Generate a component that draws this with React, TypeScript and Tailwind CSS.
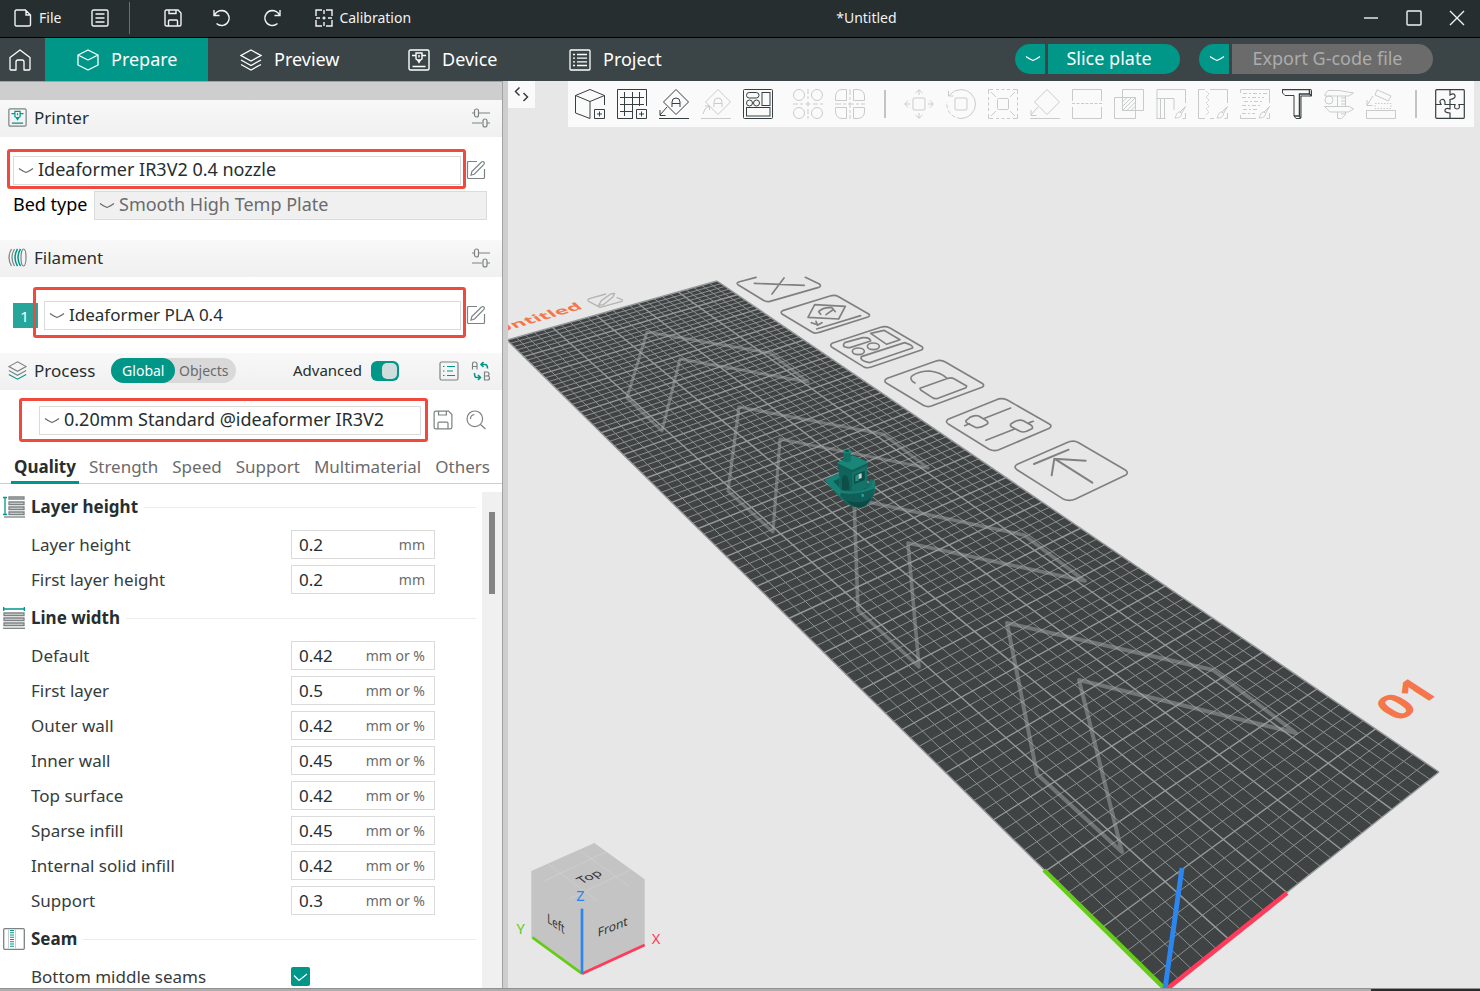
import React from "react";

type Kids = { children: React.ReactNode };

/* ---------- icon helpers ---------- */

function Svg({ s, vb, w = 1, children, className = "" }: Kids & { s: number; vb?: number; w?: number; className?: string }) {
  const v = vb ?? s;
  return (
    <svg width={s} height={s} viewBox={`0 0 ${v} ${v}`} fill="none" stroke="currentColor" strokeWidth={w} aria-hidden="true" className={`shrink-0 ${className}`}>
      {children}
    </svg>
  );
}

const Chevron = ({ className = "" }: { className?: string }) => (
  <svg width="16" height="8" viewBox="0 0 16 8" fill="none" stroke="currentColor" strokeWidth="1.2" className={`shrink-0 ${className}`} aria-hidden="true">
    <path d="M1 1.500c2.500 2 4.500 3 7 4 2.500-1 4.500-2 7-4" />
  </svg>
);

const SaveIcon = ({ s = 18, w = 1.4 }: { s?: number; w?: number }) => (
  <Svg s={s} vb={18} w={w}>
    <path d="M1 2.500Q1 1 2.500 1H14l3 3v11.500q0 1.500-1.500 1.500h-13Q1 17 1 15.500Z" />
    <path d="M5 1v3.500h7V1M4.500 17v-5q0-1 1-1h7q1 0 1 1v5" />
  </Svg>
);

const Sliders = () => (
  <Svg s={20} w={1.2}>
    <path d="M1 5h2M8 5h11M1 15h10M16 15h3" />
    <rect x="3.500" y="1" width="4" height="8" rx="2" />
    <rect x="12" y="11" width="4" height="8" rx="2" />
  </Svg>
);

const EditIcon = () => (
  <Svg s={20} w={1.2}>
    <path d="M11 1.500H2.500q-1 0-1 1v15q0 1 1 1h15q1 0 1-1V9" />
    <path d="M5 15.200 5.800 11.500 15.500 2q1.300-1 2.400 0t0 2.400L8.500 14Z" />
  </Svg>
);

const LayersIcon = ({ s = 22, accent }: { s?: number; accent?: string }) => (
  <Svg s={s} vb={22} w={1.3}>
    <path d="M11 1 21 6.500 11 12 1 6.500Z" />
    <path d="m1 11 10 5.500L21 11" />
    <path d="m1 15.500 10 5.500 10-5.500" stroke={accent ?? "currentColor"} />
  </Svg>
);

const PrinterIcon = ({ s = 22, accent }: { s?: number; accent?: string }) => (
  <Svg s={s} vb={22} w={1.4}>
    <rect x="1" y="1" width="20" height="20" rx="1.500" />
    <g stroke={accent ?? "currentColor"}>
      <path d="M4 6.500h4M14 6.500h4M4.500 17.500h13M8 4h6v6l-1.500 1h-3L8 10ZM9.500 11 11 13.500 12.500 11M11 6v2.500" />
    </g>
  </Svg>
);

/* ---------- toolbar icons, 30 x 30 ---------- */

const Plus = () => <path d="M19.500 20.500h10v9h-10ZM24.500 22.500v5M22 25h5" />;
const Brush = () => <path d="M29.500 17.500 24 23l1.500 1.500ZM24 23c-3 0-3.500 2.500-5 6 3.500 0 6.500-1 6.500-4.500" />;

const I = ({ children }: Kids) => <Svg s={30}>{children}</Svg>;

const toolsA: [string, React.ReactNode, boolean][] = [
  ["Add", <I><path d="M.5 6.500 15 .5l14.500 6L15 12.500ZM.5 6.500V24L15 29.500v-17M29.500 6.500V16" /><Plus /></I>, true],
  ["Add plate", <I><path d="M29.500 17V.5H.5v29H16M7.500 3v24M15.500 3v26M22.500 3v14M3 8.500h24M3 15.500h24M3 22.500h13" /><Plus /></I>, true],
  ["Auto orient", <I><path d="M17 .5 29.500 13 17 25.500 4.500 13ZM13 18v-5q0-4 4-4t4 4v5M13 14.500h8M0 29.500h30M8 18l-7 8M1 21v5.500h5.500" /></I>, true],
  ["Orient selection", <I><path d="M17 .5 29.500 13 17 25.500 4.500 13ZM13 18v-5q0-4 4-4t4 4v5M13 14.500h8M0 29.500h30M2 25q1-6 6-8M4 17h4.500v4" /></I>, false],
  ["Arrange", <I><rect x=".5" y=".5" width="29" height="29" rx="1" /><rect x="3.500" y="3.500" width="12.500" height="5.500" rx="2.700" /><circle cx="6.500" cy="14" r="3" /><circle cx="13.500" cy="14" r="3" /><rect x="19" y="3.500" width="8" height="13" /><rect x="3.500" y="18.500" width="23.500" height="8.500" /></I>, true],
];

const toolsB: [string, React.ReactNode][] = [
  ["Split to objects", <I><circle cx="6" cy="6" r="5.500" /><circle cx="24" cy="6" r="5.500" /><circle cx="6" cy="24" r="5.500" /><circle cx="24" cy="24" r="5.500" /><path d="M15 0v10M15 12.500v5M15 20v10M0 15h10M12.500 15h5M20 15h10" strokeDasharray="5 2" /></I>],
  ["Split to parts", <I><path d="M11.500.5v11H.5V7Q1 1 7 .5ZM18.500.5v11h11V7Q29 1 23 .5ZM.5 18.500h11v11H7Q1 29 .5 23ZM18.500 18.500h11V23q-.5 6-6.500 6.500h-4.500Z" /><path d="M15 0v30M0 15h30" strokeDasharray="6 2 3 2" /></I>],
];

const toolsC: [string, React.ReactNode, boolean][] = [
  ["Move", <I><rect x="9" y="9" width="12" height="12" rx="1" /><path d="M15 1v5M15 24v5M1 15h5M24 15h5M11.500 4 15 .7 18.500 4M11.500 26l3.500 3.300 3.500-3.300M4 11.500.7 15 4 18.500M26 11.500l3.300 3.500-3.300 3.500" /></I>, false],
  ["Rotate", <I><rect x="9" y="9" width="12" height="12" rx="1" /><path d="M3 6.500Q8 .5 15 .5A14.400 14.400 0 0 1 15 29.500M2.500 2v5h5" /><path d="M15 29.500Q1 28 .5 13" strokeDasharray="4 2" /></I>, false],
  ["Scale", <I><rect x="9.500" y="9.500" width="11" height="11" rx="1" /><path d="M.5 5V.5H5M25 .5h4.500V5M29.500 25v4.500H25M5 29.500H.5V25M3 3l5 5M27 3l-5 5M27 27l-5-5M3 27l5-5" /><path d="M8 .5h14M8 29.500h14M.5 8v14M29.500 8v14" strokeDasharray="3 2.500" /></I>, false],
  ["Lay on face", <I><path d="M17 .5 29.500 13 17 25.500 4.500 13ZM0 29.500h30M8 18l-7 8M1 21v5.500h5.500" /></I>, false],
  ["Cut", <I><path d="M.5 12V.5h29V12M.5 18v11.500h29V18" /><path d="M0 14.500h30" strokeDasharray="3 1.500" /></I>, false],
  ["Mesh boolean", <I><path d="M8.500.5h21v21h-21ZM.5 8.500h21v21H.5ZM8.500 13 13 8.500M8.500 17.500l9-9M8.500 21.500l13-13M13 21.500l8.500-8.500M17 21.500l4.500-4.500" /></I>, false],
  ["Support painting", <I><path d="M1 29.500V.5h28.500V14M.5 9.500H18V21M4.500 10v19.500M8.500 10v19.500M.5 29.500h9M29.500 24v5.500h-3" /><Brush /></I>, false],
  ["Seam painting", <I><path d="M29.500 14V.5H12M7 .5H.5v29H7M12 29.500h4M29.500 24v5.500h-3" /><path d="m8 2 3 3-3 3 3 3-3 3 3 3-3 3 3 3-3 3" strokeDasharray="2 1" /><Brush /></I>, false],
  ["Fuzzy skin painting", <I><path d="M.5 4V.5h29V14M.5 26v3.500H16M29.500 24v5.500h-3" /><path d="M3 4.500h24M2 8.500h22M4 12.500h18M2 16.500h18M3 20.500h14M2 24.500h13" strokeDasharray="4 2 2 2" /><Brush /></I>, false],
  ["Text", <I><path d="M2.500.5h26q1 0 1 1V7H19v21.500q0 1-1 1h-4L12 27V6.500H3L.5 4V.5Z" /><path d="M.5.500h27V5H17.500v22H12M27.500 5l2 2M17.500 27l1 2" strokeWidth="1.500" /></I>, true],
  ["Measure", <I><circle cx="5" cy="11" r="4" /><path d="M1 5 4 1.500h11l14.500 2.500-5 3H1ZM.5 17.500h25l4 2.500-5 3H6ZM13.500 7v10M21.500 7v10M13.500 23v6.500h4l4-4V23M17 9h4M17 12h4M17 15h4M17 25h4" /></I>, false],
  ["Assembly view", <I><path d="M11 .8 25 7l-2.500 5L9 6ZM.5 21.500h29v8H.5ZM7 7l-6 9M1 11v5.500h5.500" /><path d="M9 14.500h16v5H9Z" strokeDasharray="1.500 1.500" /></I>, false],
];

const Puzzle = () => (
  <Svg s={30} w={1.2}>
    <rect x=".7" y=".7" width="28.600" height="28.600" rx="1" />
    <path d="M15 .7V6q4-2.500 5 .5T15 10.500v5M15 15.500v4.500q-4-1.500-5 1t5 3v5.500M.7 15.500H6q-2.500-4.500 1-5t3 5h5M15 15.500h5q-1.500 4.500 2 4.500t2-4.500h5.300" />
  </Svg>
);

function ToolBtn({ label, off, children }: Kids & { label: string; off?: boolean }) {
  return (
    <button type="button" aria-label={label} disabled={off} className={`flex h-full w-[42px] items-center justify-center ${off ? "text-[#c9cbcb]" : "text-[#363f41]"}`}>
      {children}
    </button>
  );
}

const ToolSep = () => (
  <span className="flex w-[27px] justify-center"><span className="h-7 w-[2px] bg-[#c4c4c4]" /></span>
);

/* ---------- 3D scene ---------- */

const BED_X = 25;
const BED_Y = 100;

/** Maps a bed position (0..1, 0..1) to the screen through the camera's perspective. */
function project(u: number, v: number): [number, number] {
  const w = 1 + 0.2018 * u + 0.9986 * v;
  return [(1165 + 564.4 * u - 151.7 * v) / w, (989 - 61.2 * u - 309.5 * v) / w];
}

function seg(a: [number, number], b: [number, number]) {
  return `M${a[0].toFixed(2)} ${a[1].toFixed(2)}L${b[0].toFixed(2)} ${b[1].toFixed(2)}`;
}

function gridPaths() {
  let thin = "";
  let bold = "";
  for (let i = 0; i <= BED_X; i++) {
    const d = seg(project(i / BED_X, 0), project(i / BED_X, 1));
    if (i % 5 === 0) bold += d;
    else thin += d;
  }
  for (let j = 0; j <= BED_Y; j++) {
    const d = seg(project(0, j / BED_Y), project(1, j / BED_Y));
    if (j % 5 === 0) bold += d;
    else thin += d;
  }
  return { thin, bold };
}

const grid = gridPaths();
const bed = [project(0, 0), project(1, 0), project(1, 1), project(0, 1)].map((p) => p.join(",")).join(" ");

function Scene() {
  return (
    <svg viewBox="508 81 972 907" preserveAspectRatio="xMinYMin slice" className="h-full w-full [grid-area:1/1]" role="img" aria-label="Build plate with a boat model">
      <polygon points={bed} fill="#3f4343" />
      <path d={grid.thin} stroke="#8c8f8f" strokeWidth="1" />
      <path d={grid.bold} stroke="#969999" strokeWidth="1.400" />

      <g fill="none" stroke="#a6a8a8" strokeOpacity=".5" strokeLinejoin="round">
        <path strokeWidth="3" d="M647 332 770 353 808 382 680 359 662 431 627 398Z" />
        <path strokeWidth="3.200" d="M739 407 883 434 928 468 780 439 773 532 728 491Z" />
        <path strokeWidth="3.600" d="M854 499 1024 535 1085 581 908 543 919 667 858 610Z" />
        <path strokeWidth="4" d="M1007 623 1213 670 1296 733 1079 680 1122 852 1037 774Z" />
      </g>

      {/* plate name and its edit mark */}
      <text transform="matrix(1.720 -.5 .78 .72 499 333)" fontSize="12" fontWeight="700" fill="#f4764a" fontFamily="Noto Sans, sans-serif">Untitled</text>
      <g transform="translate(500 260) scale(.33333)" fill="none" stroke="#b4b4b4" strokeWidth="4" strokeLinejoin="round">
        <path d="m318 102-50 14q-8 4-2 8l34 18 66-18q4-4-2-6l-14-6" />
        <path d="m296 136 8-14 28-20 12-2-6 12-28 22Z" />
      </g>

      {/* plate actions */}
      <g transform="translate(720 260) scale(.33333)" fill="none" stroke="#808080" strokeWidth="5" strokeLinejoin="round" strokeLinecap="round">
        <path d="M108 52 56 66q-8 3-2 8l76 47q10 6 20 3l146-42q10-4 2-10l-42-20M103 70l150 6M192 54l-36 48" />
        <path d="m188 152 142-44q14-5 26 2l90 52q6 5-2 9l-146 46q-12 5-22-1l-90-54q-6-6 2-10Z" />
        <path d="m284 134 92 5-20 38-92-5ZM302 163l-6-8q12-14 40-12l10 12M318 164l20-14M288 184l4 10-18-6M292 196l14-8M290 207l132-40" />
        <path d="m336 250 146-48q14-5 28 2l96 56q6 5-2 10l-150 51q-12 5-24-1l-94-58q-8-6 0-12Z" />
        <path d="m374 248 54-15q22-2 24 10l-62 20q-28 0-16-15ZM452 220l40-9 48 28-40 14ZM424 290l130-42q26 8 24 16l-130 44q-30-6-24-18Z" />
        <ellipse cx="415" cy="274" rx="18" ry="10" /><ellipse cx="460" cy="259" rx="18" ry="10" />
        <path d="m502 355 144-51q16-7 30 2l110 64q10 6 0 12l-146 54q-16 8-30 0l-110-66q-12-8 2-15Z" />
        <path d="M585 369q-20-12-8-22 20-14 52-14 34 4 52 22M600 385l84-30q10-3 18 1l38 22-2 5-84 32q-10 3-18-3l-34-22Z" />
        <path d="m684 478 144-58q16-8 34 0l126 72q10 6 0 13l-146 62q-18 10-36 0l-120-74q-12-8-2-15Z" />
        <path d="m734 497 14-6M790 476l82-32M798 541l86-34M928 488l12-4M738 482l12-10q14-8 26-4l24 14q6 6 2 10l-16 8q-12 4-20 2l-24-12q-6-4-4-8ZM872 492l14-8q14-6 24-2l24 14q6 6 2 10l-16 8q-12 4-20 0l-26-14q-4-4-2-8Z" />
        <path d="m892 613 148-65q20-9 36 0l140 82q12 8 0 16l-148 70q-20 10-40 0l-136-86q-14-9 0-17Z" />
        <path d="m942 612 104-43M1117 668 1003 596l94 6M1003 596l-8 50" strokeWidth="6" />
      </g>

      {/* plate number */}
      <text transform="matrix(.86 -.64 .90 .58 1399 723)" fontSize="42" fontWeight="700" fill="#f4764a" fontFamily="Noto Sans, sans-serif">01</text>

      {/* boat */}
      <g transform="translate(500 260) scale(.33333)">
        <path d="m974 660 42-20 12 62 10-12 60-4 14-28q12 0 14 12l-2 30q-8 24-32 40-20 8-44-4l-24-18Z" fill="#14736a" />
        <path d="m1024 692q50 10 98-14l-2 28q-14 30-34 36-24 2-44-12l-36-38Z" fill="#105e57" />
        <path d="M1040 722q40 14 74-8-14 26-30 28-24 2-44-20Z" fill="#0c4a45" />
        <path d="m974 660 42-18 10 10-26 10 24 30-4 18Z" fill="#178377" />
        <path d="m1000 664 18-8v26Z" fill="#0f5a53" />
        <path d="m1014 612 42 22v58l-34-6Z" fill="#11645c" />
        <path d="m1056 634 46-18v66q-20 10-46 10Z" fill="#147268" />
        <path d="m1010 608 48-22 46 20v8l-48 22-44-22Z" fill="#1a8579" />
        <path d="m1010 608 46 22 48-22v8l-48 22-44-20Z" fill="#116158" />
        <path d="m1062 644 32-12v28l-32 12Z" fill="#0c4d47" />
        <path d="m1066 646 10-4v20l-10 3Z" fill="#1d9185" />
        <path d="m1076 642 9-2v14l-9 3Z" fill="#cfd2d2" />
        <path d="M1026 690v-32q4-20 14-10 8 8 8 44Z" fill="#0d4e48" />
        <path d="M1030 572v32q11 6 22 0v-32Z" fill="#137065" />
        <ellipse cx="1041" cy="573" rx="12" ry="6" fill="#1b8b7e" />
        <ellipse cx="1041" cy="573" rx="6" ry="3" fill="#0c4d47" />
        <path d="M1020 690q52 12 94-10 2-16 6-20l6 6-2 18q-50 24-104 14Z" fill="#178074" />
        <path d="M1084 702q8-2 8 4t-6 6Z" fill="#27a598" />
      </g>

      {/* origin axes */}
      <g strokeWidth="4.500">
        <path d="M1044 870 1165 989" stroke="#64cc16" />
        <path d="M1287 893 1167 989" stroke="#ff3b5c" />
        <path d="M1182 868 1165 989" stroke="#2c86ee" strokeWidth="5" />
      </g>

      {/* orientation cube */}
      <g transform="translate(500 820) scale(.33333)" fontFamily="Noto Sans, sans-serif">
        <path d="M283 69 434 178V375L246 461 94 352V153Z" fill="#c4c4c4" />
        <path d="m146 134 146 108M240 92l146 106M132 183 318 96M208 237l184-88" stroke="#d2d2d2" strokeWidth="2" />
        <g fill="#333">
          <text transform="matrix(.95 -.42 .7 .56 245 192)" fontSize="40">Top</text>
          <text transform="matrix(.72 .5 0 1 142 307)" fontSize="40">Left</text>
          <text transform="matrix(.95 -.38 0 .95 293 351)" fontSize="38">Front</text>
        </g>
        <g strokeWidth="8">
          <path d="M246 461 97 352" stroke="#64cc16" />
          <path d="M246 461 434 375" stroke="#ff3b5c" />
          <path d="M246 461V266" stroke="#2c86ee" />
        </g>
        <g fontSize="44" textAnchor="middle">
          <text x="468" y="371" fill="#ff3b5c">X</text>
          <text x="62" y="343" fill="#64cc16">Y</text>
          <text x="241" y="242" fill="#2c86ee">Z</text>
        </g>
      </g>
    </svg>
  );
}

/* ---------- sidebar ---------- */

function SectionHeader({ icon, title, children }: { icon: React.ReactNode; title: string; children: React.ReactNode }) {
  return (
    <header className="flex h-[37px] items-center bg-linear-to-b from-[#f8f8f8] to-[#f0f0f0] pr-[11px] pb-[2px] pl-2 text-[#7c8283]">
      {icon}
      <h2 className="ml-[7px] text-[17px] text-[#262e30]">{title}</h2>
      {children}
    </header>
  );
}

function Combo({ label, value, disabled, size = "text-[18px]" }: { label: string; value: string; disabled?: boolean; size?: string }) {
  return (
    <div className="relative flex h-[29px] min-w-0 flex-1 items-center">
      <select
        aria-label={label}
        disabled={disabled}
        className={`h-full w-full appearance-none border border-[#dbdbdb] pb-[2px] pl-6 leading-[25px] opacity-100 ${size} ${disabled ? "bg-[#f0f0f0] text-[#6b6b6b]" : "bg-white text-[#262e30]"}`}
      >
        <option>{value}</option>
      </select>
      <Chevron className="pointer-events-none absolute left-[5px] text-[#6b6b6b]" />
    </div>
  );
}

const Mark = ({ className }: { className: string }) => (
  <span className={`pointer-events-none absolute rounded-[3px] border-3 border-[#f04a3e] ${className}`} />
);

function Group({ icon, title, children }: { icon: React.ReactNode; title: string; children: React.ReactNode }) {
  return (
    <section className="pb-px">
      <div className="flex h-10 items-center pr-[6px] pl-[3px] text-[#7c8283]">
        {icon}
        <h3 className="ml-[6px] text-[17px] font-bold text-[#262e30]">{title}</h3>
        <span className="ml-[6px] h-px flex-1 bg-[#ececec]" />
      </div>
      {children}
    </section>
  );
}

function Field({ id, label, value, unit }: { id: string; label: string; value: string; unit: string }) {
  return (
    <div className="flex h-[35px] items-center pl-[31px]">
      <label htmlFor={id} className="w-[260px] text-[17px] text-[#363c3d]">{label}</label>
      <div className="flex h-[29px] w-36 items-center border border-[#dbdbdb] pr-[9px] pl-[7px]">
        <input id={id} defaultValue={value} className="w-0 min-w-0 flex-1 bg-transparent text-[17px] text-[#262e30] outline-none" />
        <span className="text-[14px] text-[#6b6b6b]">{unit}</span>
      </div>
    </div>
  );
}

const lineWidths: [string, string][] = [
  ["Default", "0.42"],
  ["First layer", "0.5"],
  ["Outer wall", "0.42"],
  ["Inner wall", "0.45"],
  ["Top surface", "0.42"],
  ["Sparse infill", "0.45"],
  ["Internal solid infill", "0.42"],
  ["Support", "0.3"],
];

function Sidebar() {
  return (
    <aside className="flex w-[508px] shrink-0 flex-col border-r-[5px] border-[#cecece] bg-white">
      <div className="flex min-h-0 flex-1 flex-col border-r border-[#a2a2a2]">
        <div className="h-[19px] shrink-0 border-t border-[#a2a2a2] bg-[#cecece]" />
        <SectionHeader icon={<PrinterIcon s={19} accent="#009688" />} title="Printer">
          <button type="button" aria-label="Printer settings" className="ml-auto"><Sliders /></button>
        </SectionHeader>
        <div className="flex flex-col gap-[6px] pt-[19px] pb-5 pl-[13px]">
          <div className="flex items-center text-[#7c8283]">
            <div className="relative flex flex-1">
              <Combo label="Printer preset" value="Ideaformer IR3V2 0.4 nozzle" />
              <Mark className="-top-[7px] -right-[5px] -bottom-[4px] -left-[6px]" />
            </div>
            <button type="button" aria-label="Edit printer" className="mr-4 ml-[5px] pb-[2px]"><EditIcon /></button>
          </div>
          <div className="flex items-center pr-[15px]">
            <span className="w-[81px] pb-[2px] text-[18px] text-black">Bed type</span>
            <Combo label="Bed type" value="Smooth High Temp Plate" disabled />
          </div>
        </div>

        <SectionHeader
          icon={
            <Svg s={19} w={1.2}>
              <ellipse cx="15.500" cy="9.500" rx="2.500" ry="8.500" />
              <path d="M12.500 1q-5 8.500 0 17M9.500 1q-5 8.500 0 17" stroke="#009688" strokeWidth="1.500" />
              <path d="M6.500 1q-5 8.500 0 17M3.500 1q-5 8.500 0 17" />
            </Svg>
          }
          title="Filament"
        >
          <button type="button" aria-label="Filament settings" className="ml-auto"><Sliders /></button>
        </SectionHeader>
        <div className="flex items-center pt-6 pb-[23px] pl-[13px] text-[#7c8283]">
          <button type="button" className="h-[25px] w-[25px] bg-[#26a69a] pr-[2px] text-[15px] leading-[24px] text-white">1</button>
          <div className="relative ml-[6px] flex flex-1">
            <Combo label="Filament preset" value="Ideaformer PLA 0.4" size="text-[17px]" />
            <Mark className="-top-[14px] -right-[5px] -bottom-[8px] -left-[11px]" />
          </div>
          <button type="button" aria-label="Edit filament" className="mr-4 ml-[5px] pb-[2px]"><EditIcon /></button>
        </div>

        <SectionHeader icon={<LayersIcon s={19} accent="#009688" />} title="Process">
          <div className="ml-4 flex h-[25px] items-center rounded-full bg-[#d9d9d9] text-[14px]">
            <button type="button" className="h-full w-16 rounded-full bg-[#009688] text-white">Global</button>
            <button type="button" className="h-full w-[61px] pr-1 text-[#6b6b6b]">Objects</button>
          </div>
          <label htmlFor="advanced" className="ml-auto text-[15px] text-[#262e30]">Advanced</label>
          <span className="relative ml-[9px] flex h-5 w-7">
            <input id="advanced" type="checkbox" defaultChecked className="peer h-full w-full appearance-none rounded-[6px] bg-[#9e9e9e] checked:bg-[#009688]" />
            <span className="pointer-events-none absolute top-[2px] right-[2px] h-4 w-[15px] rounded-[5px] bg-[#cfdedc]" />
          </span>
          <button type="button" aria-label="Compare presets" className="mr-3 ml-10">
            <Svg s={20} w={1.2}>
              <rect x="1" y="1" width="18" height="18" rx="1.500" />
              <path d="M4 5.500h1.500M8 5.500h8M4 10h1.500M8 10h6M4 14.500h1.500M8 14.500h8" stroke="#009688" />
            </Svg>
          </button>
          <button type="button" aria-label="Transfer settings">
            <Svg s={20} w={1.2}>
              <path d="M1.500 8.500V3q0-2 2.200-2T6 3v5.500M1.500 5.500H6" />
              <path d="M13.500 11v8h3q2 0 2-2t-2-2h-3 2.500q2 0 2-2t-2-2Z" />
              <path d="M12.500 1 10 3.500 12.500 6M10 3.500h4q2.500 0 2.500 4M7 14l2.500 2.500L7 19M9.500 16.500h-4Q3.500 16.500 3.500 12" stroke="#009688" strokeWidth="1.600" />
            </Svg>
          </button>
        </SectionHeader>
        <div className="flex items-center pt-4 pr-4 pl-[39px] text-[#7c8283]">
          <div className="relative flex flex-1">
            <Combo label="Process preset" value="0.20mm Standard @ideaformer IR3V2" />
            <Mark className="-top-[8px] -right-[7px] -bottom-[7px] -left-[20px]" />
          </div>
          <button type="button" aria-label="Save preset" className="ml-3 pb-[2px]"><SaveIcon s={20} w={1.1} /></button>
          <button type="button" aria-label="Search settings" className="ml-[13px] pb-[2px]">
            <Svg s={20} w={1.2}>
              <circle cx="8.800" cy="8.800" r="7.800" />
              <path d="m14.500 14.500 5 4.500M4.500 9q0-4 4-4.500" />
            </Svg>
          </button>
        </div>

        <nav className="mt-[13px] flex h-9 gap-[14px] border-b border-[#cecece] pl-[11px] text-[17px] text-[#6b6b6b]">
          <button type="button" className="-mr-1 h-[36px] border-b-3 border-[#009688] px-[3px] pt-[5px] font-bold text-[#262e30]">Quality</button>
          {["Strength", "Speed", "Support", "Multimaterial", "Others"].map((t) => (
            <button type="button" key={t} className="h-[36px] border-b-3 border-transparent pt-[5px]">{t}</button>
          ))}
        </nav>

        <div className="flex min-h-0 flex-1">
          <div className="min-w-0 flex-1 overflow-hidden pt-[3px]">
            <Group
              title="Layer height"
              icon={
                <Svg s={22} w={1.300}>
                  <path d="M0 1.500h4M0 18.500h4M2 1.500v17" stroke="#009688" />
                  <path d="M6 1h15v2H6ZM6 6h15v2.500H6ZM6 11h15v2.500H6ZM6 16h15v2.500H6Z" fill="#dcdcdc" />
                  <path d="M1 21h21" />
                </Svg>
              }
            >
              <Field id="lh" label="Layer height" value="0.2" unit="mm" />
              <Field id="flh" label="First layer height" value="0.2" unit="mm" />
            </Group>
            <Group
              title="Line width"
              icon={
                <Svg s={22} w={1.300}>
                  <path d="M0 2h22M.7 0v4M21.300 0v4" stroke="#009688" />
                  <path d="M1 6h20v2.500H1ZM1 11h20v2.500H1ZM1 16h20v2.500H1Z" fill="#dcdcdc" />
                  <path d="M0 21.300h22" />
                </Svg>
              }
            >
              {lineWidths.map(([label, value]) => (
                <Field key={label} id={"lw-" + label.replace(/ /g, "-")} label={label} value={value} unit="mm or %" />
              ))}
            </Group>
            <Group
              title="Seam"
              icon={
                <Svg s={22} w={1.300}>
                  <rect x=".7" y=".7" width="20.600" height="20.600" rx="1" />
                  <path d="M5.500 1.500v19M12.500 1.500v19" stroke="#c9cccc" strokeWidth="1" />
                  <path d="M9 2v18" stroke="#009688" strokeWidth="4" strokeDasharray="1 1.250" />
                </Svg>
              }
            >
              <div className="flex h-[35px] items-center pl-[31px]">
                <label htmlFor="seams" className="w-[260px] text-[17px] text-[#363c3d]">Bottom middle seams</label>
                <span className="relative flex">
                  <input id="seams" type="checkbox" defaultChecked className="h-[19px] w-[19px] appearance-none rounded-[2px] bg-[#009688]" />
                  <svg width="19" height="19" viewBox="0 0 19 19" fill="none" stroke="#fff" strokeWidth="1.200" className="pointer-events-none absolute" aria-hidden="true">
                    <path d="m3 8.500 5 5 8-6.500" />
                  </svg>
                </span>
              </div>
            </Group>
          </div>
          <div className="mt-2 w-5 bg-[#f0f0f0] pt-5">
            <div className="ml-[7px] h-[82px] w-[6px] bg-[#858585]" />
          </div>
        </div>
      </div>
    </aside>
  );
}

/* ---------- page ---------- */

const topTabs: [string, React.ReactNode, string][] = [
  ["Prepare", <Svg s={22} w={1.300}><path d="M11 1 21 6v10l-10 5-10-5V6ZM1 6l10 5 10-5" strokeLinejoin="round" /></Svg>, "w-[163px] bg-[#009688]"],
  ["Preview", <LayersIcon />, "w-[168px]"],
  ["Device", <PrinterIcon />, "w-[161px]"],
  ["Project", <Svg s={22} w={1.300}><rect x="1" y="1" width="20" height="20" rx="1" /><path d="M4 5.500h2M8 5.500h10M4 9.200h2M8 9.200h10M4 12.800h2M8 12.800h10M4 16.500h2M8 16.500h10" /></Svg>, "w-[161px]"],
];

export default function App() {
  return (
    <div className="flex h-screen flex-col overflow-hidden bg-[#e7e7e7] font-['Noto_Sans',sans-serif]">
      <div className="flex h-[38px] shrink-0 items-center border-b border-black bg-[#262e30] pb-[2px] text-[14px] text-[#f2f2f2]">
        <div className="flex w-[56.5%] items-center pl-[14px]">
          <button type="button" className="flex items-center gap-[7px]">
            <Svg s={18} w={1.400}><path d="M12 1H2.500Q1 1 1 2.500v13Q1 17 2.500 17h12.500q1.500 0 1.500-1.500V6L12 1.500V6h4.500" /></Svg>
            File
          </button>
          <button type="button" aria-label="Menu" className="ml-[30px]">
            <Svg s={18} w={1.400}><rect x="1" y="1" width="16" height="16" rx="1.500" /><path d="M4.500 5h9M4.500 9h9M4.500 13h9" /></Svg>
          </button>
          <span className="mr-[34px] ml-5 h-8 w-px bg-[#6a7071]" />
          <button type="button" aria-label="Save"><SaveIcon /></button>
          <button type="button" aria-label="Undo" className="ml-[31px]">
            <Svg s={18} w={1.400}><path d="M1 1v5.500h5.500M1.500 6Q4 1.500 9 1.500a7.500 7.500 0 1 1-5.500 13" /></Svg>
          </button>
          <button type="button" aria-label="Redo" className="ml-8">
            <Svg s={18} w={1.400}><path d="M17 1v5.500h-5.500M16.500 6Q14 1.500 9 1.500a7.500 7.500 0 1 0 5.500 13" /></Svg>
          </button>
          <button type="button" className="ml-[34px] flex items-center gap-[6px]">
            <Svg s={18} w={1.400}><path d="M7 1H1v6M11 1h6v6M17 11v6h-6M7 17H1v-6M9 1v4M9 13v4M1 9h4M13 9h4M7.500 9h3M9 7.500v3" /></Svg>
            Calibration
          </button>
        </div>
        <span>*Untitled</span>
        <div className="ml-auto flex items-center gap-[27px] pr-[15px]">
          <button type="button" aria-label="Minimize"><Svg s={16} w={1.400}><path d="M1 8h14" /></Svg></button>
          <button type="button" aria-label="Maximize"><Svg s={16} w={1.400}><rect x="1" y="1" width="14" height="14" rx="1" /></Svg></button>
          <button type="button" aria-label="Close"><Svg s={16} w={1.400}><path d="m1 1 14 14M15 1 1 15" /></Svg></button>
        </div>
      </div>

      <div className="flex h-[43px] shrink-0 items-center bg-[#3b4446] text-[18px] text-white">
        <button type="button" aria-label="Home" className="flex h-full w-[45px] items-center pl-[9px]">
          <Svg s={22} w={1.300}><path d="M1 8.500 11 1l10 7.500V20q0 1-1 1h-5v-8q0-2-2-2h-4q-2 0-2 2v8H2q-1 0-1-1Z" strokeLinejoin="round" /></Svg>
        </button>
        {topTabs.map(([label, icon, cls]) => (
          <button type="button" key={label} className={`flex h-full items-center gap-3 pl-8 ${cls}`}>
            {icon}
            {label}
          </button>
        ))}
        <div className="mr-[47px] mb-px ml-auto flex h-[30px] gap-[3px]">
          <button type="button" aria-label="Slice options" className="flex w-[30px] items-center justify-center rounded-l-full bg-[#009688] pl-[6px]"><Chevron /></button>
          <button type="button" className="mr-4 w-[132px] rounded-r-full bg-[#009688] pr-[10px] pb-px">Slice plate</button>
          <button type="button" aria-label="Export options" className="flex w-[30px] items-center justify-center rounded-l-full bg-[#009688] pl-[6px]"><Chevron /></button>
          <button type="button" disabled className="w-[201px] rounded-r-full bg-[#6b6b6b] pr-[10px] pb-px text-[#acacac]">Export G-code file</button>
        </div>
      </div>

      <div className="flex min-h-0 flex-1">
        <Sidebar />
        <main className="grid min-h-0 min-w-0 flex-1 grid-rows-[minmax(0,1fr)]">
          <Scene />
          <div className="z-10 flex items-start justify-between self-start [grid-area:1/1]">
            <button type="button" aria-label="Collapse sidebar" className="flex h-[27px] w-[27px] items-center justify-center bg-[#fafafa] text-[#363f41]">
              <Svg s={15} w={1.500}><path d="M5.500.5 1.500 4.500l4 4M9.500 6l4 4-4 4" /></Svg>
            </button>
            <div className="mr-[6px] flex h-[46px] items-center bg-[#fafafa] pr-[3px] pb-px pl-px">
              {toolsA.map(([l, n, on]) => <ToolBtn key={l} label={l} off={!on}>{n}</ToolBtn>)}
              <span className="w-2" />
              {toolsB.map(([l, n]) => <ToolBtn key={l} label={l} off>{n}</ToolBtn>)}
              <ToolSep />
              {toolsC.map(([l, n, on]) => <ToolBtn key={l} label={l} off={!on}>{n}</ToolBtn>)}
              <ToolSep />
              <ToolBtn label="Assemble"><Puzzle /></ToolBtn>
            </div>
          </div>
        </main>
      </div>
      <div className="flex h-[3px] shrink-0 border-t border-[#929292] bg-[#aeadb0]">
        <span className="ml-auto w-[109px] bg-[#2b2a2d]" />
      </div>
    </div>
  );
}
